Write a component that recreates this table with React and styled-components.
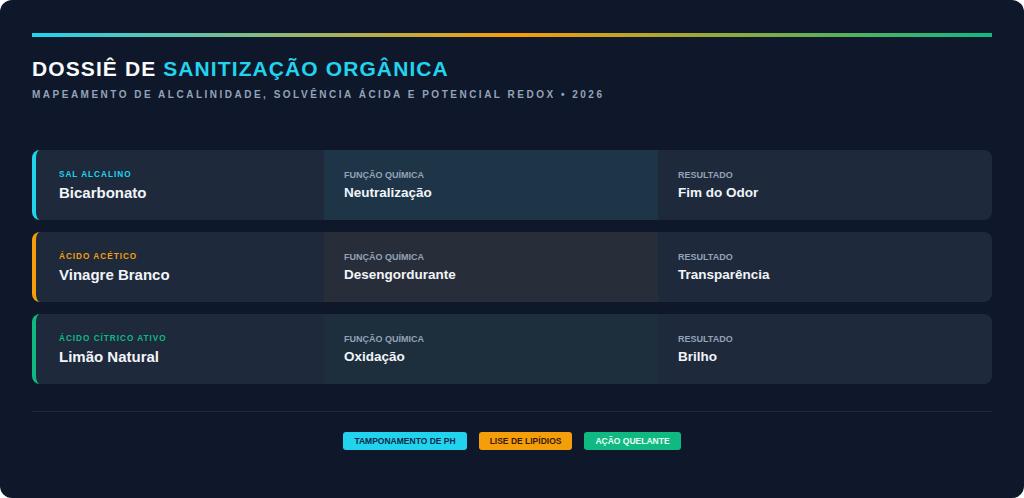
import React from 'react';
import styled, { createGlobalStyle } from 'styled-components';

const GlobalStyle = createGlobalStyle`
  html, body {
    margin: 0;
    padding: 0;
    background: #ffffff;
  }
  * {
    box-sizing: border-box;
  }
`;

const agents = [
  {
    tag: 'Sal Alcalino',
    name: 'Bicarbonato',
    fn: 'Neutralização',
    result: 'Fim do Odor',
    accent: '#22d3ee',
    tint: 'rgba(34, 211, 238, 0.07)'
  },
  {
    tag: 'Ácido Acético',
    name: 'Vinagre Branco',
    fn: 'Desengordurante',
    result: 'Transparência',
    accent: '#f59e0b',
    tint: 'rgba(245, 158, 11, 0.05)'
  },
  {
    tag: 'Ácido Cítrico Ativo',
    name: 'Limão Natural',
    fn: 'Oxidação',
    result: 'Brilho',
    accent: '#10b981',
    tint: 'rgba(16, 185, 129, 0.04)'
  }
];

const badges = [
  { label: 'Tamponamento de pH', bg: '#22d3ee', fg: '#0c2a4a' },
  { label: 'Lise de Lipídios', bg: '#f59e0b', fg: '#3b1a05' },
  { label: 'Ação Quelante', bg: '#10b981', fg: '#ecfdf5' }
];

const App = () => {
  return (
    <>
      <GlobalStyle />
      <Page>
        <GradientBar />
        <Header>
          <Title>
            Dossiê de <Accent>Sanitização Orgânica</Accent>
          </Title>
          <Subtitle>
            Mapeamento de Alcalinidade, Solvência Ácida e Potencial Redox • 2026
          </Subtitle>
        </Header>

        <RowList>
          {agents.map(agent => (
            <Row key={agent.name} accent={agent.accent}>
              <Cell>
                <Tag color={agent.accent}>{agent.tag}</Tag>
                <Name>{agent.name}</Name>
              </Cell>
              <Cell tint={agent.tint}>
                <Label>Função Química</Label>
                <Value>{agent.fn}</Value>
              </Cell>
              <Cell>
                <Label>Resultado</Label>
                <Value>{agent.result}</Value>
              </Cell>
            </Row>
          ))}
        </RowList>

        <Footer>
          {badges.map(badge => (
            <Badge key={badge.label} bg={badge.bg} fg={badge.fg}>
              {badge.label}
            </Badge>
          ))}
        </Footer>
      </Page>
    </>
  );
};

const Page = styled.div`
  width: 1024px;
  height: 498px;
  background: #0f172a;
  border-radius: 12px;
  padding: 33px 32px 0 32px;
  font-family: 'Liberation Sans', Arial, Helvetica, sans-serif;
  color: #f1f5f9;
  overflow: hidden;
`;

const GradientBar = styled.div`
  height: 4px;
  width: 960px;
  background: linear-gradient(90deg, #22d3ee 0%, #f59e0b 50%, #10b981 100%);
`;

const Header = styled.header`
  margin-top: 20px;
`;

const Title = styled.h1`
  margin: 0;
  font-size: 21px;
  line-height: 24px;
  font-weight: 700;
  letter-spacing: 1.1px;
  text-transform: uppercase;
  color: #f8fafc;
`;

const Accent = styled.span`
  color: #22d3ee;
`;

const Subtitle = styled.p`
  margin: 8px 0 0;
  font-size: 10px;
  line-height: 12px;
  font-weight: 700;
  letter-spacing: 2.5px;
  text-transform: uppercase;
  color: #94a3b8;
`;

const RowList = styled.div`
  margin-top: 49px;
  width: 960px;
  display: flex;
  flex-direction: column;
  gap: 12px;
`;

const Row = styled.div`
  height: 70px;
  display: grid;
  grid-template-columns: 288px 334px 1fr;
  background: #1e293b;
  border-left: 4px solid ${props => props.accent};
  border-radius: 8px;
  overflow: hidden;
`;

const Cell = styled.div`
  display: flex;
  flex-direction: column;
  justify-content: center;
  gap: 3px;
  padding: 0 20px;
  background: ${props => props.tint || 'transparent'};

  &:first-child {
    padding-left: 23px;
  }
`;

const Label = styled.span`
  font-size: 9px;
  line-height: 12px;
  font-weight: 700;
  text-transform: uppercase;
  color: #94a3b8;
`;

const Tag = styled(Label)`
  font-size: 8.2px;
  letter-spacing: 1px;
  color: ${props => props.color};
`;

const Value = styled.span`
  font-size: 13.5px;
  line-height: 18px;
  font-weight: 700;
  color: #f1f5f9;
`;

const Name = styled(Value)`
  font-size: 15px;
`;

const Footer = styled.footer`
  margin-top: 27px;
  width: 960px;
  border-top: 1px solid #1e293b;
  padding-top: 20px;
  display: flex;
  justify-content: center;
  gap: 12px;
`;

const Badge = styled.span`
  height: 18px;
  padding: 0 11px;
  display: inline-flex;
  align-items: center;
  border-radius: 3px;
  font-size: 8.5px;
  font-weight: 700;
  text-transform: uppercase;
  background: ${props => props.bg};
  color: ${props => props.fg};
`;

export default App;
